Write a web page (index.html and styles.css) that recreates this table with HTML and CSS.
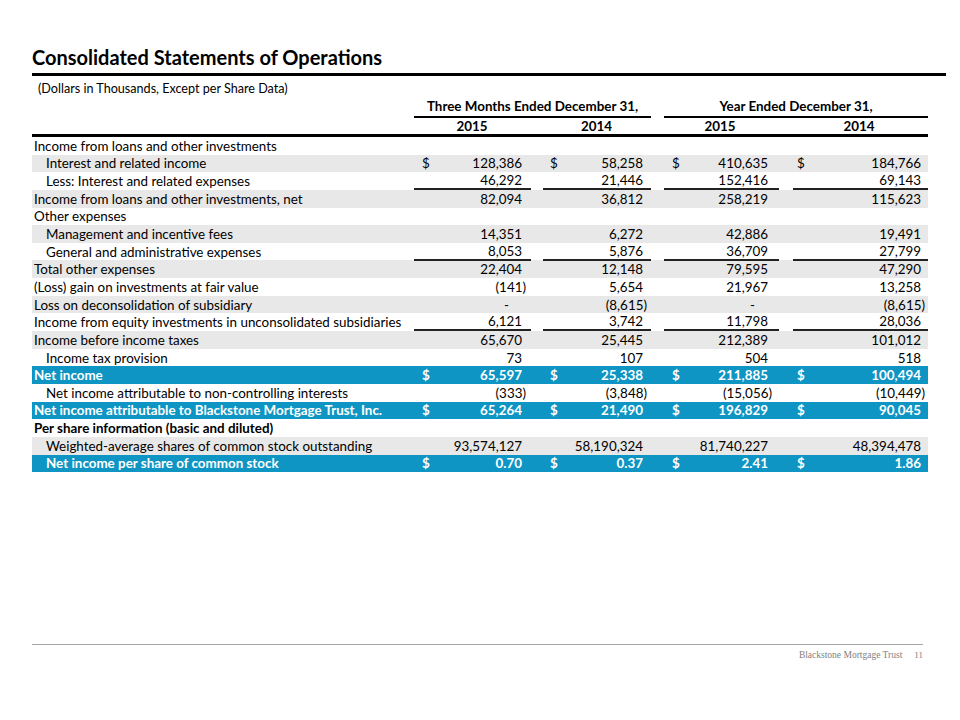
FILE: index.html
```html
<!DOCTYPE html>
<html lang="en">
<head>
<meta charset="utf-8">
<title>Consolidated Statements of Operations</title>
<link rel="stylesheet" href="styles.css">
</head>
<body>
<div class="page">
  <h1 class="title">Consolidated Statements of Operations</h1>
  <div class="subtitle">(Dollars in Thousands, Except per Share Data)</div>

  <div class="table">
    <div class="row head1">
      <div class="g1">Three Months Ended December 31,</div>
      <div class="g2">Year Ended December 31,</div>
    </div>
    <div class="row head2">
      <div class="c1 yr">2015</div>
      <div class="c2 yr">2014</div>
      <div class="c3 yr">2015</div>
      <div class="c4 yr">2014</div>
    </div>

    <div class="row">
      <div class="lbl">Income from loans and other investments</div>
    </div>
    <div class="row gray">
      <div class="lbl ind">Interest and related income</div>
      <div class="v c1"><span class="d">$</span><span class="n">128,386</span></div>
      <div class="v c2"><span class="d">$</span><span class="n">58,258</span></div>
      <div class="v c3"><span class="d">$</span><span class="n">410,635</span></div>
      <div class="v c4"><span class="d">$</span><span class="n">184,766</span></div>
    </div>
    <div class="row ul">
      <div class="lbl ind">Less: Interest and related expenses</div>
      <div class="v c1"><span class="n">46,292</span></div>
      <div class="v c2"><span class="n">21,446</span></div>
      <div class="v c3"><span class="n">152,416</span></div>
      <div class="v c4"><span class="n">69,143</span></div>
    </div>
    <div class="row gray">
      <div class="lbl">Income from loans and other investments, net</div>
      <div class="v c1"><span class="n">82,094</span></div>
      <div class="v c2"><span class="n">36,812</span></div>
      <div class="v c3"><span class="n">258,219</span></div>
      <div class="v c4"><span class="n">115,623</span></div>
    </div>
    <div class="row">
      <div class="lbl">Other expenses</div>
    </div>
    <div class="row gray">
      <div class="lbl ind">Management and incentive fees</div>
      <div class="v c1"><span class="n">14,351</span></div>
      <div class="v c2"><span class="n">6,272</span></div>
      <div class="v c3"><span class="n">42,886</span></div>
      <div class="v c4"><span class="n">19,491</span></div>
    </div>
    <div class="row ul">
      <div class="lbl ind">General and administrative expenses</div>
      <div class="v c1"><span class="n">8,053</span></div>
      <div class="v c2"><span class="n">5,876</span></div>
      <div class="v c3"><span class="n">36,709</span></div>
      <div class="v c4"><span class="n">27,799</span></div>
    </div>
    <div class="row gray">
      <div class="lbl">Total other expenses</div>
      <div class="v c1"><span class="n">22,404</span></div>
      <div class="v c2"><span class="n">12,148</span></div>
      <div class="v c3"><span class="n">79,595</span></div>
      <div class="v c4"><span class="n">47,290</span></div>
    </div>
    <div class="row">
      <div class="lbl">(Loss) gain on investments at fair value</div>
      <div class="v c1"><span class="n neg">(141)</span></div>
      <div class="v c2"><span class="n">5,654</span></div>
      <div class="v c3"><span class="n">21,967</span></div>
      <div class="v c4"><span class="n">13,258</span></div>
    </div>
    <div class="row gray">
      <div class="lbl">Loss on deconsolidation of subsidiary</div>
      <div class="v c1"><span class="n dash">-</span></div>
      <div class="v c2"><span class="n neg">(8,615)</span></div>
      <div class="v c3"><span class="n dash">-</span></div>
      <div class="v c4"><span class="n neg">(8,615)</span></div>
    </div>
    <div class="row ul">
      <div class="lbl">Income from equity investments in unconsolidated subsidiaries</div>
      <div class="v c1"><span class="n">6,121</span></div>
      <div class="v c2"><span class="n">3,742</span></div>
      <div class="v c3"><span class="n">11,798</span></div>
      <div class="v c4"><span class="n">28,036</span></div>
    </div>
    <div class="row gray">
      <div class="lbl">Income before income taxes</div>
      <div class="v c1"><span class="n">65,670</span></div>
      <div class="v c2"><span class="n">25,445</span></div>
      <div class="v c3"><span class="n">212,389</span></div>
      <div class="v c4"><span class="n">101,012</span></div>
    </div>
    <div class="row">
      <div class="lbl ind">Income tax provision</div>
      <div class="v c1"><span class="n">73</span></div>
      <div class="v c2"><span class="n">107</span></div>
      <div class="v c3"><span class="n">504</span></div>
      <div class="v c4"><span class="n">518</span></div>
    </div>
    <div class="row blue">
      <div class="lbl">Net income</div>
      <div class="v c1"><span class="d">$</span><span class="n">65,597</span></div>
      <div class="v c2"><span class="d">$</span><span class="n">25,338</span></div>
      <div class="v c3"><span class="d">$</span><span class="n">211,885</span></div>
      <div class="v c4"><span class="d">$</span><span class="n">100,494</span></div>
    </div>
    <div class="row">
      <div class="lbl ind">Net income attributable to non-controlling interests</div>
      <div class="v c1"><span class="n neg">(333)</span></div>
      <div class="v c2"><span class="n neg">(3,848)</span></div>
      <div class="v c3"><span class="n neg">(15,056)</span></div>
      <div class="v c4"><span class="n neg">(10,449)</span></div>
    </div>
    <div class="row blue">
      <div class="lbl">Net income attributable to Blackstone Mortgage Trust, Inc.</div>
      <div class="v c1"><span class="d">$</span><span class="n">65,264</span></div>
      <div class="v c2"><span class="d">$</span><span class="n">21,490</span></div>
      <div class="v c3"><span class="d">$</span><span class="n">196,829</span></div>
      <div class="v c4"><span class="d">$</span><span class="n">90,045</span></div>
    </div>
    <div class="row">
      <div class="lbl strong">Per share information (basic and diluted)</div>
    </div>
    <div class="row gray">
      <div class="lbl ind">Weighted-average shares of common stock outstanding</div>
      <div class="v c1"><span class="n">93,574,127</span></div>
      <div class="v c2"><span class="n">58,190,324</span></div>
      <div class="v c3"><span class="n">81,740,227</span></div>
      <div class="v c4"><span class="n">48,394,478</span></div>
    </div>
    <div class="row blue">
      <div class="lbl ind">Net income per share of common stock</div>
      <div class="v c1"><span class="d">$</span><span class="n">0.70</span></div>
      <div class="v c2"><span class="d">$</span><span class="n">0.37</span></div>
      <div class="v c3"><span class="d">$</span><span class="n">2.41</span></div>
      <div class="v c4"><span class="d">$</span><span class="n">1.86</span></div>
    </div>
  </div>

  <div class="footer">
    <span class="brand">Blackstone Mortgage Trust</span>
    <span class="pg">11</span>
  </div>
</div>
</body>
</html>
```
FILE: styles.css
```css
* { box-sizing: border-box; }
html, body { margin: 0; padding: 0; background: #fff; }
body {
  font-family: Lato, "Open Sans", "Liberation Sans", sans-serif;
  color: #000;
}
.page {
  width: 960px;
  height: 720px;
  padding: 44px 0 57px 32px;
  display: flex;
  flex-direction: column;
}
.title {
  margin: 0;
  width: 914px;
  font-size: 20px;
  line-height: 26px;
  font-weight: 700;
  padding-bottom: 3px;
  border-bottom: 3px solid #000;
}
.subtitle {
  margin-top: 5px;
  padding-left: 6px;
  font-size: 12.6px;
  line-height: 16px;
}
.table {
  width: 896px;
  font-size: 13.4px;
  font-variant-numeric: tabular-nums;
}
.row {
  display: grid;
  grid-template-columns: 382px 117px 12px 108px 13px 115px 14px 135px;
  height: 17.65px;
  align-items: center;
}
.row > div { height: 100%; display: flex; align-items: center; }
.head1 { height: 20px; margin-top: 1px; font-weight: 700; }
.head1 > div {
  justify-content: center;
  border-bottom: 2px solid #000;
  padding-bottom: 2px;
}
.g1 { grid-column: 2 / 5; }
.g2 { grid-column: 6 / 9; }
.head2 {
  height: 19px;
  font-weight: 700;
  border-bottom: 3px solid #000;
}
.head2 .yr { justify-content: center; }
.c1 { grid-column: 2; padding: 0 9px 0 8px; }
.c2 { grid-column: 4; padding: 0 8px 0 7px; }
.c3 { grid-column: 6; padding: 0 11px 0 8px; }
.c4 { grid-column: 8; padding: 0 7px 0 4px; }
.lbl { grid-column: 1; padding-left: 2px; white-space: nowrap; }
.lbl.ind { padding-left: 14px; }
.strong { font-weight: 700; }
.v { justify-content: space-between; }
.v .n { margin-left: auto; white-space: nowrap; }
.v .n.neg { margin-right: -4px; }
.v .n.dash { margin-right: 13px; }
.gray { background: #e8e8e8; }
.blue { background: #0e95c3; color: #fff; font-weight: 700; }
.ul .v { border-bottom: 2px solid #222; }
.footer {
  margin-top: auto;
  width: 891px;
  border-top: 1px solid #a6a6a6;
  padding-top: 2px;
  display: flex;
  justify-content: flex-end;
  align-items: center;
  gap: 12px;
  font-family: "Liberation Serif", "DejaVu Serif", serif;
  font-size: 9.5px;
  line-height: 16px;
  color: #7f7f7f;
}
.pg { font-size: 9px; }
```
